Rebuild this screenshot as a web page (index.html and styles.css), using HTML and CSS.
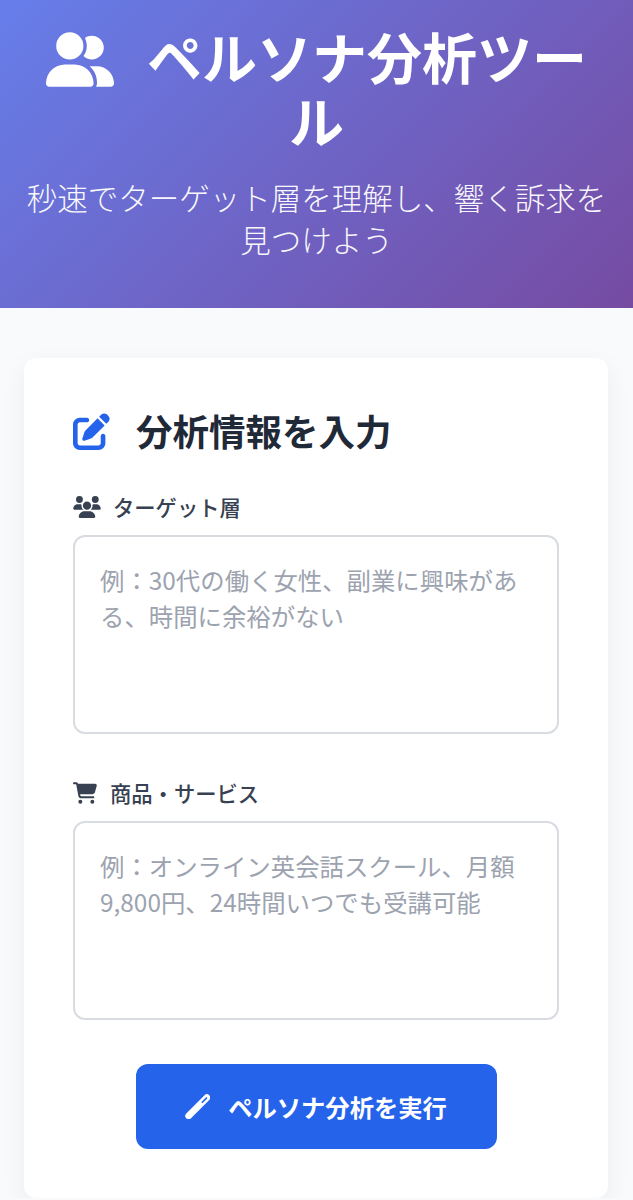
FILE: index.html
```html
<!DOCTYPE html>
<html lang="ja">
<head>
  <meta charset="UTF-8">
  <meta name="viewport" content="width=device-width, initial-scale=1.0">
  <title>ペルソナ分析ツール</title>
  <link rel="stylesheet" href="styles.css">
</head>
<body>
  <header class="hero">
    <h1 class="hero-title">
      <svg class="hero-icon" viewBox="0 0 640 512"><path d="M96 128a128 128 0 1 1 256 0A128 128 0 1 1 96 128zM0 482.3C0 383.8 79.8 304 178.3 304h91.4C368.2 304 448 383.8 448 482.3c0 16.4-13.3 29.7-29.7 29.7H29.7C13.3 512 0 498.7 0 482.3zM609.3 512H471.4c5.4-9.4 8.6-20.3 8.6-32v-8c0-60.7-27.1-115.2-69.8-151.8c2.4-.1 4.7-.2 7.1-.2h61.4C567.8 320 640 392.2 640 481.3c0 17-13.8 30.7-30.7 30.7zM432 256c-31 0-59-12.6-79.3-32.9C372.4 196.5 384 163.6 384 128c0-26.8-6.6-52.1-18.3-74.3C384.3 40.1 407.2 32 432 32c61.9 0 112 50.1 112 112s-50.1 112-112 112z"/></svg>ペルソナ分析ツール
    </h1>
    <p class="hero-sub">秒速でターゲット層を理解し、響く訴求を見つけよう</p>
  </header>

  <main class="content">
    <section class="card">
      <h2 class="card-title">
        <svg class="card-icon" viewBox="0 0 512 512"><path d="M471.6 21.7c-21.9-21.9-57.3-21.9-79.2 0L362.3 51.7l97.9 97.9 30.1-30.1c21.9-21.9 21.9-57.3 0-79.2L471.6 21.7zm-299.2 220c-6.1 6.1-10.8 13.6-13.5 21.9l-29.6 88.8c-2.9 8.6-.6 18.1 5.8 24.6s15.9 8.7 24.6 5.8l88.8-29.6c8.2-2.7 15.7-7.4 21.9-13.5L437.7 172.3 339.7 74.3 172.4 241.7zM96 64C43 64 0 107 0 160V416c0 53 43 96 96 96H352c53 0 96-43 96-96V320c0-17.7-14.3-32-32-32s-32 14.3-32 32v96c0 17.7-14.3 32-32 32H96c-17.7 0-32-14.3-32-32V160c0-17.7 14.3-32 32-32h96c17.7 0 32-14.3 32-32s-14.3-32-32-32H96z"/></svg>分析情報を入力
      </h2>

      <div class="field">
        <label class="field-label" for="target">
          <svg class="label-icon" viewBox="0 0 640 512"><path d="M144 0a80 80 0 1 1 0 160A80 80 0 1 1 144 0zM512 0a80 80 0 1 1 0 160A80 80 0 1 1 512 0zM0 298.7C0 239.8 47.8 192 106.7 192h42.7c15.9 0 31 3.5 44.6 9.7c-1.3 7.2-1.9 14.7-1.9 22.3c0 38.2 16.8 72.5 43.3 96c-.2 0-.4 0-.7 0H21.3C9.6 320 0 310.4 0 298.7zM405.3 320c-.2 0-.4 0-.7 0c26.6-23.5 43.3-57.8 43.3-96c0-7.6-.7-15-1.9-22.3c13.6-6.3 28.7-9.7 44.6-9.7h42.7C592.2 192 640 239.8 640 298.7c0 11.8-9.6 21.3-21.3 21.3H405.3zM224 224a96 96 0 1 1 192 0 96 96 0 1 1-192 0zM128 485.3C128 411.7 187.7 352 261.3 352H378.7C452.3 352 512 411.7 512 485.3c0 14.7-11.9 26.7-26.7 26.7H154.7c-14.7 0-26.7-11.9-26.7-26.7z"/></svg>ターゲット層
        </label>
        <textarea class="field-input" id="target" placeholder="例：30代の働く女性、副業に興味がある、時間に余裕がない"></textarea>
      </div>

      <div class="field">
        <label class="field-label" for="product">
          <svg class="label-icon cart" viewBox="0 0 576 512"><path d="M0 24C0 10.7 10.7 0 24 0H69.5c22 0 41.5 12.8 50.6 32h411c26.3 0 45.5 25 38.6 50.4l-41 152.3c-8.5 31.4-37 53.3-69.5 53.3H170.7l5.4 28.5c2.2 11.3 12.1 19.5 23.6 19.5H488c13.3 0 24 10.7 24 24s-10.7 24-24 24H199.7c-34.6 0-64.3-24.6-70.7-58.5L77.4 54.5c-.7-3.8-4-6.5-7.9-6.5H24C10.7 48 0 37.3 0 24zM128 464a48 48 0 1 1 96 0 48 48 0 1 1-96 0zm336-48a48 48 0 1 1 0 96 48 48 0 1 1 0-96z"/></svg>商品・サービス
        </label>
        <textarea class="field-input" id="product" placeholder="例：オンライン英会話スクール、月額9,800円、24時間いつでも受講可能"></textarea>
      </div>

      <div class="actions">
        <button class="run-btn" type="button">
          <svg class="btn-icon" viewBox="0 0 24 24"><line class="wand" x1="3.5" y1="21" x2="21" y2="3.5"/><line class="wand-slit" x1="20.6" y1="3.9" x2="16.6" y2="7.9"/></svg>ペルソナ分析を実行
        </button>
      </div>
    </section>
  </main>
</body>
</html>
```

FILE: styles.css
```css
* { box-sizing: border-box; }
body {
  margin: 0;
  background: #f8fafc;
  color: #1f2937;
  font-family: "Noto Sans CJK JP", "Noto Sans", sans-serif;
}

.hero {
  height: 308px;
  padding: 23px 24px 0;
  text-align: center;
  color: #fff;
  background: linear-gradient(135deg, #667eea, #764ba2);
}
.hero-title {
  margin: 0;
  font-size: 55px;
  line-height: 64px;
  font-weight: 700;
}
.hero-icon {
  width: 68px;
  height: 55px;
  margin-right: 33px;
  fill: #fff;
  vertical-align: -8px;
}
.hero-sub {
  margin: 25px -8px 0;
  font-size: 30.5px;
  line-height: 42px;
  font-weight: 300;
  opacity: .95;
}

.content { padding: 50px 25px 0 24px; }
.card {
  height: 840px;
  padding: 46px 49px;
  background: #fff;
  border-radius: 12px;
  box-shadow: 0 8px 24px rgba(0, 0, 0, .06);
}
.card-title {
  display: flex;
  align-items: center;
  margin: 0 0 33px;
  font-size: 36.5px;
  line-height: 54px;
  font-weight: 700;
  color: #1f2937;
}
.card-icon {
  width: 37px;
  height: 37px;
  margin-right: 26px;
  fill: #2563eb;
}

.field { margin-bottom: 43px; }
.field-label {
  display: flex;
  align-items: center;
  margin-bottom: 12px;
  font-size: 21.3px;
  line-height: 32px;
  font-weight: 500;
  color: #374151;
}
.label-icon {
  width: 28px;
  height: 22px;
  margin-right: 12px;
  fill: #374151;
}
.label-icon.cart {
  width: 24px;
  margin-right: 13px;
}
.field-input {
  display: block;
  width: 100%;
  height: 199px;
  padding: 25px 25px;
  border: 2px solid #d8dbe0;
  border-radius: 12px;
  background: #fff;
  font-family: inherit;
  font-size: 24.4px;
  line-height: 36px;
  resize: none;
  outline: none;
}
.field-input::placeholder { color: #9ca3af; opacity: 1; }

.actions {
  display: flex;
  justify-content: center;
  padding-top: 1px;
}
.run-btn {
  display: flex;
  align-items: center;
  justify-content: center;
  width: 361px;
  height: 85px;
  border: 0;
  border-radius: 12px;
  background: #2563eb;
  color: #fff;
  font-family: inherit;
  font-size: 24.3px;
  font-weight: 700;
}
.btn-icon {
  width: 25px;
  height: 25px;
  margin-right: 18px;
}
.wand {
  stroke: #fff;
  stroke-width: 6.4;
  stroke-linecap: round;
}
.wand-slit {
  stroke: #2563eb;
  stroke-width: 1.6;
  stroke-linecap: round;
}
```
